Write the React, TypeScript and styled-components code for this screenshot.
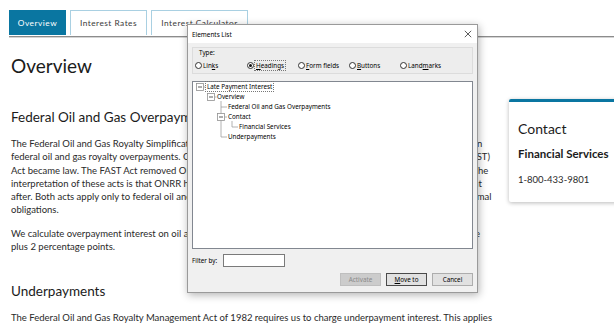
import React from 'react'
import styled, { createGlobalStyle } from 'styled-components'

const GlobalStyle = createGlobalStyle`
  html, body {
    margin: 0;
    padding: 0;
    background: #ffffff;
    overflow: hidden;
  }
  body {
    font-family: Lato, "Open Sans", sans-serif;
    color: #222;
  }
`

const Page = styled.div`
  position: relative;
  width: 614px;
  height: 329px;
  overflow: hidden;
  padding: 10px 0 0 9px;
  box-sizing: border-box;
`

const TabBar = styled.nav`
  display: flex;
  gap: 4px;
  border-bottom: 1px solid #8c8c8c;
  box-shadow: 0 1px 0 #d4d4d4;
  padding-bottom: 1px;
`

const Tab = styled.div<{ $active?: boolean; $w: number }>`
  width: ${p => p.$w}px;
  height: 25px;
  box-sizing: border-box;
  display: flex;
  align-items: center;
  justify-content: center;
  font-size: 8.3px;
  letter-spacing: 0.5px;
  white-space: nowrap;
  color: ${p => (p.$active ? '#ffffff' : '#3a3a3a')};
  background: ${p => (p.$active ? '#0a76a1' : '#ffffff')};
  border: 1px solid ${p => (p.$active ? '#0a76a1' : '#a9d0e2')};
  border-bottom: none;
`

const Body = styled.div`
  display: flex;
  align-items: flex-start;
`

const Main = styled.main`
  width: 486px;
  flex: none;
  padding-left: 2px;
`

const Title = styled.h1`
  margin: 17px 0 0;
  font-size: 19px;
  line-height: 24px;
  font-weight: 400;
  color: #1b1b1b;
`

const SectionTitle = styled.h2<{ $gap: number }>`
  margin: ${p => p.$gap}px 0 0;
  font-size: 13.5px;
  line-height: 18px;
  font-weight: 400;
  color: #1b1b1b;
`

const Para = styled.p<{ $gap: number }>`
  margin: ${p => p.$gap}px 0 0;
  font-size: 9.5px;
  line-height: 13.3px;
  white-space: nowrap;
  color: #2a2a2a;
`

const Aside = styled.aside`
  margin-left: 12px;
  margin-top: 62px;
  flex: none;
`

const ContactCard = styled.section`
  width: 130px;
  border-top: 3px solid #0a76a1;
  border-radius: 2px 0 0 2px;
  box-shadow: 0 1px 4px rgba(0, 0, 0, 0.28);
  padding: 18px 0 16px 9px;
`

const CardTitle = styled.div`
  font-size: 14px;
  line-height: 18px;
  color: #1b1b1b;
`

const CardSub = styled.div`
  margin-top: 8px;
  font-size: 11.5px;
  line-height: 16px;
  font-weight: 700;
  color: #1b1b1b;
`

const CardPhone = styled.div`
  margin-top: 10.5px;
  font-size: 9.5px;
  line-height: 13px;
  color: #2a2a2a;
`

/* ---- the Elements List window floating over the page ---- */

const Dialog = styled.div`
  position: absolute;
  left: 187px;
  top: 24px;
  width: 291px;
  height: 269px;
  box-sizing: border-box;
  border: 1px solid #9a9a9a;
  background: #f0f0f0;
  box-shadow: 1px 2px 8px rgba(0, 0, 0, 0.3);
  font-family: "Noto Sans", "Open Sans", sans-serif;
  font-size: 6.3px;
  color: #000;
  display: flex;
  flex-direction: column;
`

const TitleBar = styled.div`
  height: 18px;
  background: #ffffff;
  display: flex;
  align-items: center;
  justify-content: space-between;
  padding: 0 5px 0 4px;
  font-size: 6.4px;
`

const CloseIcon = () => (
  <svg width="8" height="8" viewBox="0 0 8 8">
    <path d="M0.8 0.8 L7.2 7.2 M7.2 0.8 L0.8 7.2" stroke="#333" strokeWidth="0.8" />
  </svg>
)

const DialogBody = styled.div`
  flex: 1;
  display: flex;
  flex-direction: column;
  padding: 4px 4px 0;
`

const GroupBox = styled.fieldset`
  margin: 0;
  height: 27px;
  box-sizing: border-box;
  border: 1px solid #dcdcdc;
  background: #ededed;
  padding: 1px 2px 0;
`

const GroupLabel = styled.div`
  line-height: 8px;
  padding-left: 4px;
`

const RadioRow = styled.div`
  display: flex;
  margin-top: 4px;
  line-height: 9px;
`

const RadioItem = styled.label<{ $w?: number }>`
  display: flex;
  align-items: center;
  gap: 1px;
  width: ${p => (p.$w ? `${p.$w}px` : 'auto')};
`

const RadioDot = styled.span<{ $on?: boolean }>`
  width: 7px;
  height: 7px;
  box-sizing: border-box;
  border-radius: 50%;
  border: 0.8px solid #333;
  background: #fff;
  display: inline-flex;
  align-items: center;
  justify-content: center;
  &::after {
    content: '';
    width: 3.4px;
    height: 3.4px;
    border-radius: 50%;
    background: ${p => (p.$on ? '#111' : 'transparent')};
  }
`

const FocusText = styled.span`
  outline: 1px dotted #777;
  outline-offset: 0;
  padding: 0 1px;
`

const TreeBox = styled.div`
  position: relative;
  margin-top: 7px;
  height: 168px;
  box-sizing: border-box;
  border: 1px solid #828790;
  background: #ffffff;
`

const TreeRow = styled.div<{ $indent: number }>`
  height: 10px;
  line-height: 10px;
  padding-left: ${p => p.$indent}px;
`

const TreeLines = styled.svg`
  position: absolute;
  left: 0;
  top: 0;
`

const FilterRow = styled.div`
  margin-top: 5px;
  display: flex;
  align-items: center;
  gap: 6px;
`

const FilterInput = styled.div`
  width: 62px;
  height: 13px;
  box-sizing: border-box;
  border: 1px solid #7a7a7a;
  background: #fff;
`

const ButtonRow = styled.div`
  margin-top: 6px;
  display: flex;
  justify-content: flex-end;
  gap: 5px;
`

const DlgButton = styled.div<{ $disabled?: boolean; $default?: boolean }>`
  width: 41px;
  height: 13px;
  box-sizing: border-box;
  display: flex;
  align-items: center;
  justify-content: center;
  background: ${p => (p.$disabled ? '#cccccc' : '#e1e1e1')};
  color: ${p => (p.$disabled ? '#8a8a8a' : '#000')};
  border: 1px solid ${p => (p.$disabled ? '#bfbfbf' : p.$default ? '#4a4a4a' : '#adadad')};
`

const Expander = ({ x, y }: { x: number; y: number }) => (
  <g>
    <rect x={x - 3.5} y={y - 3.5} width="7" height="7" fill="#fff" stroke="#919191" strokeWidth="0.8" />
    <line x1={x - 2} y1={y} x2={x + 2} y2={y} stroke="#333" strokeWidth="0.8" />
  </g>
)

const tree = [
  { label: 'Late Payment Interest', indent: 13, focus: true },
  { label: 'Overview', indent: 24 },
  { label: 'Federal Oil and Gas Overpayments', indent: 35 },
  { label: 'Contact', indent: 35 },
  { label: 'Financial Services', indent: 46 },
  { label: 'Underpayments', indent: 35 }
]

function ElementsList() {
  return (
    <Dialog>
      <TitleBar>
        <span>Elements List</span>
        <CloseIcon />
      </TitleBar>
      <DialogBody>
        <GroupBox>
          <GroupLabel>Type:</GroupLabel>
          <RadioRow>
            <RadioItem $w={52}>
              <RadioDot />
              <span>Lin<u>k</u>s</span>
            </RadioItem>
            <RadioItem $w={51}>
              <RadioDot $on />
              <FocusText><u>H</u>eadings</FocusText>
            </RadioItem>
            <RadioItem $w={51}>
              <RadioDot />
              <span><u>F</u>orm fields</span>
            </RadioItem>
            <RadioItem $w={51}>
              <RadioDot />
              <span><u>B</u>uttons</span>
            </RadioItem>
            <RadioItem>
              <RadioDot />
              <span>Land<u>m</u>arks</span>
            </RadioItem>
          </RadioRow>
        </GroupBox>
        <TreeBox>
          <TreeLines width="60" height="70">
            <g stroke="#a0a0a0" strokeWidth="0.8" fill="none">
              <line x1="10.5" y1="5" x2="12.5" y2="5" />
              <line x1="21.5" y1="15" x2="23.5" y2="15" />
              <line x1="28" y1="19" x2="28" y2="55" />
              <line x1="28" y1="25" x2="34" y2="25" />
              <line x1="31.5" y1="35" x2="34" y2="35" />
              <line x1="39" y1="39" x2="39" y2="45" />
              <line x1="39" y1="45" x2="45" y2="45" />
              <line x1="28" y1="55" x2="34" y2="55" />
            </g>
            <Expander x={7} y={5} />
            <Expander x={18} y={15} />
            <Expander x={28} y={35} />
          </TreeLines>
          {tree.map(t => (
            <TreeRow key={t.label} $indent={t.indent}>
              {t.focus ? <FocusText>{t.label}</FocusText> : t.label}
            </TreeRow>
          ))}
        </TreeBox>
        <FilterRow>
          <span>Filter by:</span>
          <FilterInput />
        </FilterRow>
        <ButtonRow>
          <DlgButton $disabled>Activate</DlgButton>
          <DlgButton $default><span><u>M</u>ove to</span></DlgButton>
          <DlgButton>Cancel</DlgButton>
        </ButtonRow>
      </DialogBody>
    </Dialog>
  )
}

export default function App() {
  return (
    <>
      <GlobalStyle />
      <Page>
        <TabBar>
          <Tab $active $w={57}>Overview</Tab>
          <Tab $w={77}>Interest Rates</Tab>
          <Tab $w={97}>Interest Calculator</Tab>
        </TabBar>
        <Body>
          <Main>
            <Title>Overview</Title>
            <SectionTitle $gap={30}>Federal Oil and Gas Overpayments</SectionTitle>
            <Para $gap={11}>
              The Federal Oil and Gas Royalty Simplification and Fairness Act of 1996 (RSFA) requires that we pay interest upon
              <br />
              federal oil and gas royalty overpayments. On December 4, 2015, the Fixing America's Surface Transportation (FAST)
              <br />
              Act became law. The FAST Act removed ONRR's authorities to pay interest upon overpayments after that date. The
              <br />
              interpretation of these acts is that ONRR has no authority to pay interest on overpayments issued on or after that
              <br />
              after. Both acts apply only to federal oil and gas royalty obligations and do not apply to solid minerals, or geothermal
              <br />
              obligations.
            </Para>
            <Para $gap={10}>
              We calculate overpayment interest on oil and gas royalty obligations using the Internal Revenue Service (IRS) rate
              <br />
              plus 2 percentage points.
            </Para>
            <SectionTitle $gap={29}>Underpayments</SectionTitle>
            <Para $gap={10.5}>
              The Federal Oil and Gas Royalty Management Act of 1982 requires us to charge underpayment interest. This applies
            </Para>
          </Main>
          <Aside>
            <ContactCard>
              <CardTitle>Contact</CardTitle>
              <CardSub>Financial Services</CardSub>
              <CardPhone>1-800-433-9801</CardPhone>
            </ContactCard>
          </Aside>
        </Body>
        <ElementsList />
      </Page>
    </>
  )
}
